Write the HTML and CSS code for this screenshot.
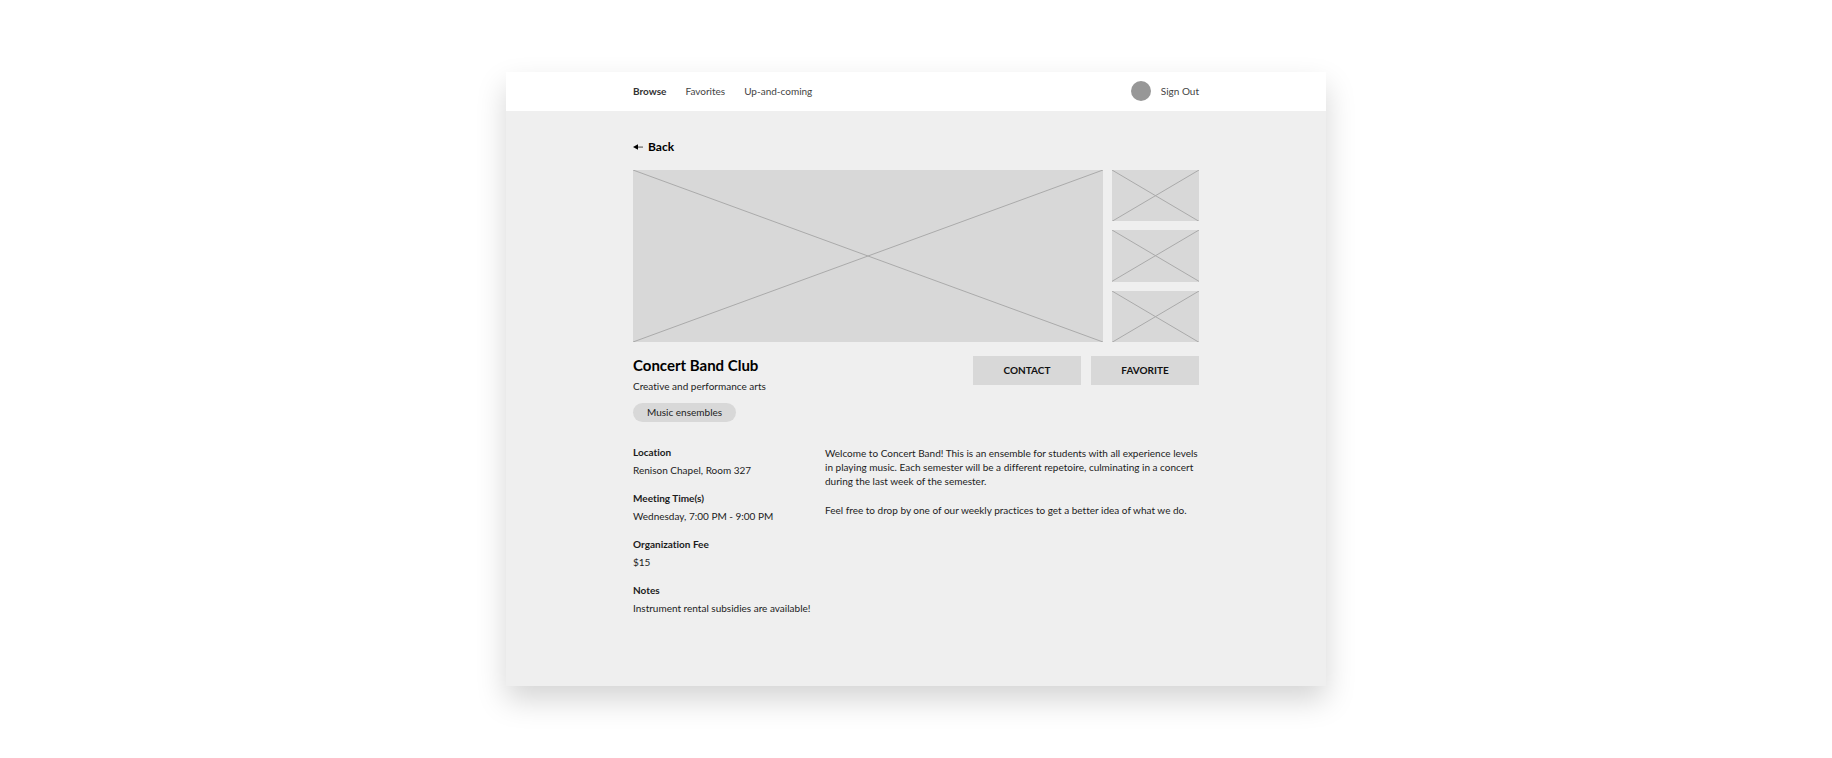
FILE: index.html
```html
<!DOCTYPE html>
<html lang="en">
<head>
<meta charset="utf-8">
<meta name="viewport" content="width=device-width, initial-scale=1">
<title>Concert Band Club</title>
<link rel="stylesheet" href="styles.css">
</head>
<body>
<div class="window">
  <header class="topbar">
    <nav class="nav" aria-label="Main">
      <a class="nav-link current" href="#browse">Browse</a>
      <a class="nav-link" href="#favorites">Favorites</a>
      <a class="nav-link" href="#upcoming">Up-and-coming</a>
    </nav>
    <div class="account">
      <span class="avatar"></span>
      <a class="nav-link" href="#signout">Sign Out</a>
    </div>
  </header>
  <main class="content">
    <a class="back" href="#back">
      <svg class="back-arrow" viewBox="0 0 10 6" aria-hidden="true"><path d="M0 3 5 .3V5.7Z"/><path d="M4 2.7h6v.7H4Z"/></svg>
      Back
    </a>
    <div class="gallery">
      <svg class="picture" preserveAspectRatio="none" viewBox="0 0 100 100" aria-hidden="true"><path d="M0 0 100 100M100 0 0 100"/></svg>
      <div class="thumbs">
        <svg class="picture" preserveAspectRatio="none" viewBox="0 0 100 100" aria-hidden="true"><path d="M0 0 100 100M100 0 0 100"/></svg>
        <svg class="picture" preserveAspectRatio="none" viewBox="0 0 100 100" aria-hidden="true"><path d="M0 0 100 100M100 0 0 100"/></svg>
        <svg class="picture" preserveAspectRatio="none" viewBox="0 0 100 100" aria-hidden="true"><path d="M0 0 100 100M100 0 0 100"/></svg>
      </div>
    </div>
    <div class="summary">
      <div class="heading">
        <h1 class="title">Concert Band Club</h1>
        <p class="category">Creative and performance arts</p>
        <span class="tag">Music ensembles</span>
      </div>
      <div class="actions">
        <button class="action" type="button">CONTACT</button>
        <button class="action" type="button">FAVORITE</button>
      </div>
    </div>
    <div class="details">
      <dl class="facts">
        <div class="fact"><dt>Location</dt><dd>Renison Chapel, Room 327</dd></div>
        <div class="fact"><dt>Meeting Time(s)</dt><dd>Wednesday, 7:00 PM - 9:00 PM</dd></div>
        <div class="fact"><dt>Organization Fee</dt><dd>$15</dd></div>
        <div class="fact"><dt>Notes</dt><dd>Instrument rental subsidies are available!</dd></div>
      </dl>
      <div class="description">
        <p>Welcome to Concert Band! This is an ensemble for students with all experience levels in playing music. Each semester will be a different repetoire, culminating in a concert during the last week of the semester.</p>
        <p>Feel free to drop by one of our weekly practices to get a better idea of what we do.</p>
      </div>
    </div>
  </main>
</div>
</body>
</html>
```
FILE: styles.css
```css
* { box-sizing: border-box; }
body {
  margin: 0;
  padding: 72px 16px;
  background: #fff;
  color: #1c1c1c;
  font: 10px/14px Lato, "Open Sans", sans-serif;
  font-variant-ligatures: none;
}
h1, p, dl, dd { margin: 0; }
a { color: inherit; text-decoration: none; }
.window {
  max-width: 820px;
  margin: 0 auto;
  background: #efefef;
  box-shadow: 0 14px 28px rgba(0, 0, 0, .17);
}
.topbar {
  display: flex;
  justify-content: space-between;
  align-items: center;
  padding: 9px 127px 10px;
  background: #fff;
  color: #444;
}
.nav { display: flex; gap: 19px; }
.current { font-weight: 700; color: #333; }
.account { display: flex; align-items: center; gap: 10px; }
.avatar { width: 20px; height: 20px; border-radius: 50%; background: #979797; }
.content { padding: 28px 127px 71px; }
.back {
  display: inline-flex;
  align-items: center;
  gap: 5px;
  color: #000;
  font-size: 12px;
  line-height: 16px;
  font-weight: 700;
}
.back-arrow { width: 10px; height: 6px; }
.gallery {
  display: grid;
  grid-template-columns: minmax(0, 1fr) 87px;
  grid-template-rows: 172px;
  gap: 9px;
  margin-top: 15px;
}
.thumbs { display: grid; grid-template-rows: repeat(3, minmax(0, 1fr)); gap: 9px; }
.picture {
  display: block;
  width: 100%;
  height: 100%;
  background: #d8d8d8;
  fill: none;
  stroke: #aaa;
  stroke-width: 1px;
}
.picture path { vector-effect: non-scaling-stroke; }
.summary {
  display: flex;
  justify-content: space-between;
  align-items: flex-start;
  margin-top: 14px;
}
.heading { display: flex; flex-direction: column; align-items: flex-start; }
.title { color: #000; font-size: 15px; line-height: 18px; font-weight: 700; }
.category { margin-top: 5px; }
.tag {
  margin-top: 10px;
  padding: 2px 14px 3px;
  border-radius: 10px;
  background: #d8d8d8;
}
.actions { display: flex; gap: 10px; }
.action {
  width: 108px;
  padding: 7px 0 8px;
  border: 0;
  background: #d8d8d8;
  color: #111;
  font: inherit;
  font-weight: 700;
}
.details {
  display: grid;
  grid-template-columns: 192px 1fr;
  margin-top: 23px;
}
.facts { display: grid; gap: 14px; align-content: start; }
.fact { display: grid; gap: 4px; }
.fact dt { font-weight: 700; }
.description { display: grid; gap: 15px; align-content: start; padding-top: 1px; }
```
